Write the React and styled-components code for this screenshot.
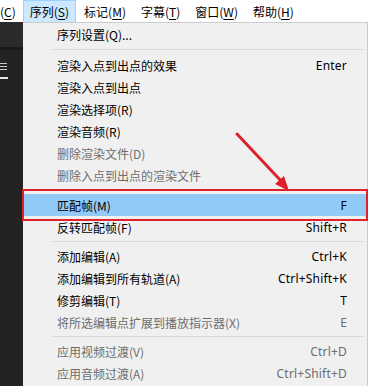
import React from 'react';
import styled, { createGlobalStyle } from 'styled-components';

const GlobalStyle = createGlobalStyle`
  html, body {
    margin: 0;
    padding: 0;
    background: #ffffff;
    overflow: hidden;
  }
  body {
    font-family: "Noto Sans CJK SC", "Noto Sans", sans-serif;
    font-size: 12px;
  }
`;

const Page = styled.div`
  position: relative;
  width: 368px;
  height: 386px;
  display: flex;
  flex-direction: column;
  overflow: hidden;
`;

const MenuBar = styled.div`
  display: flex;
  align-items: stretch;
  height: 22px;
  background: #ffffff;
`;

const BarItem = styled.div`
  display: flex;
  align-items: center;
  box-sizing: border-box;
  padding: 0 6px;
  margin-left: ${p => p.$offset || 0}px;
  color: #000;
  white-space: nowrap;
  background: ${p => (p.$open ? '#cce8ff' : 'transparent')};
  border: 1px solid ${p => (p.$open ? '#99d1ff' : 'transparent')};
  border-bottom: none;
  line-height: 20px;

  u {
    text-decoration: underline;
    text-underline-offset: 2px;
  }
`;

const Body = styled.div`
  flex: 1;
  display: flex;
  min-height: 0;
`;

const SidePanel = styled.div`
  width: 23px;
  flex-shrink: 0;
  display: flex;
  flex-direction: column;
  background: #232323;
`;

const PanelHeader = styled.div`
  height: 25px;
  background: #2b2b2b;
  border-bottom: 3px solid #1a1a1a;
`;

const PanelTab = styled.div`
  padding-top: 13px;
  display: flex;
  flex-direction: column;
  gap: 2px;
`;

const HamburgerLine = styled.div`
  width: 7px;
  height: 1px;
  background: #c8c8c8;
  margin-bottom: 2px;
`;

const TabUnderline = styled.div`
  width: 8px;
  height: 2px;
  margin-top: 3px;
  background: #e6e6e6;
`;

const Dropdown = styled.div`
  flex: 1;
  box-sizing: border-box;
  background: #f0f0f0;
  border-top: 1px solid #cccccc;
  border-right: 1px solid #cccccc;
  padding: 0 1px;
  display: flex;
  flex-direction: column;
`;

const Item = styled.div`
  position: relative;
  height: 22px;
  flex-shrink: 0;
  display: flex;
  align-items: center;
  justify-content: space-between;
  padding: 0 19px 0 33px;
  color: ${p => (p.$disabled ? '#6d6d6d' : '#000000')};
  background: ${p => (p.$active ? '#91c9f7' : 'transparent')};
  white-space: nowrap;

  ${p =>
    p.$marked &&
    `
    &::after {
      content: '';
      position: absolute;
      left: -2px;
      right: -2px;
      top: -5px;
      bottom: -5px;
      border: 2px solid #e0202a;
    }
  `}
`;

const Shortcut = styled.span`
  font-family: "Noto Sans", "Noto Sans CJK SC", sans-serif;
  letter-spacing: 0.2px;
`;

const Separator = styled.div`
  height: ${p => p.$h || 8}px;
  flex-shrink: 0;
  display: flex;
  align-items: center;
  padding-left: 29px;
  padding-right: 3px;

  &::before {
    content: '';
    flex: 1;
    height: 1px;
    background: #d7d7d7;
  }
`;

const Arrow = styled.svg`
  position: absolute;
  left: 0;
  top: 0;
  pointer-events: none;
`;

const menu = [
  { label: '序列设置(Q)...' },
  { sep: true, h: 9 },
  { label: '渲染入点到出点的效果', key: 'Enter' },
  { label: '渲染入点到出点' },
  { label: '渲染选择项(R)' },
  { label: '渲染音频(R)' },
  { label: '删除渲染文件(D)', disabled: true },
  { label: '删除入点到出点的渲染文件', disabled: true },
  { sep: true },
  { label: '匹配帧(M)', key: 'F', active: true, marked: true },
  { label: '反转匹配帧(F)', key: 'Shift+R' },
  { sep: true, h: 7 },
  { label: '添加编辑(A)', key: 'Ctrl+K' },
  { label: '添加编辑到所有轨道(A)', key: 'Ctrl+Shift+K' },
  { label: '修剪编辑(T)', key: 'T' },
  { label: '将所选编辑点扩展到播放指示器(X)', key: 'E', disabled: true },
  { sep: true, h: 7 },
  { label: '应用视频过渡(V)', key: 'Ctrl+D', disabled: true },
  { label: '应用音频过渡(A)', key: 'Ctrl+Shift+D', disabled: true },
];

function App() {
  return (
    <Page>
      <GlobalStyle />
      <MenuBar>
        <BarItem $offset={-7}>(<u>C</u>)</BarItem>
        <BarItem $offset={0} $open>序列(<u>S</u>)</BarItem>
        <BarItem $offset={1}>标记(<u>M</u>)</BarItem>
        <BarItem $offset={1}>字幕(<u>T</u>)</BarItem>
        <BarItem $offset={1}>窗口(<u>W</u>)</BarItem>
        <BarItem $offset={1}>帮助(<u>H</u>)</BarItem>
      </MenuBar>
      <Body>
        <SidePanel>
          <PanelHeader />
          <PanelTab>
            <div>
              <HamburgerLine />
              <HamburgerLine />
              <HamburgerLine />
            </div>
            <TabUnderline />
          </PanelTab>
        </SidePanel>
        <Dropdown>
          {menu.map((m, i) =>
            m.sep ? (
              <Separator key={i} $h={m.h} />
            ) : (
              <Item key={i} $disabled={m.disabled} $active={m.active} $marked={m.marked}>
                <span>{m.label}</span>
                {m.key && <Shortcut>{m.key}</Shortcut>}
              </Item>
            )
          )}
        </Dropdown>
      </Body>
      <Arrow width="368" height="386" viewBox="0 0 368 386">
        <line x1="237" y1="134" x2="283" y2="183" stroke="#e0202a" strokeWidth="3" strokeLinecap="round" />
        <polygon points="289,191 275,184 284,176" fill="#e0202a" />
      </Arrow>
    </Page>
  );
}

export default App;
